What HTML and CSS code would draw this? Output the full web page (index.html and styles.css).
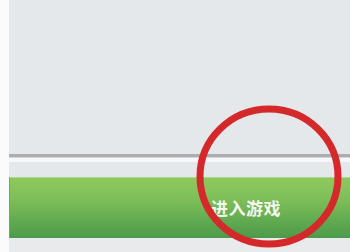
FILE: index.html
```html
<!DOCTYPE html>
<html lang="zh">
  <head>
    <meta charset="UTF-8" />
    <meta name="viewport" content="width=device-width, initial-scale=1.0" />
    <title>进入游戏</title>
    <link rel="stylesheet" href="styles.css">
  </head>

  <body>
    <div id="page">
      <div class="edge"></div>
      <div id="screen">
        <div class="top"></div>
        <div class="rule"></div>
        <div class="gap-dark"></div>
        <div class="gap-light"></div>
        <div class="gap"></div>
        <button id="enterGame"><span>进入游戏</span></button>
        <div class="bottom"></div>
      </div>
    </div>

    <svg class="mark" width="152" height="148" viewBox="0 0 152 148">
      <ellipse cx="75" cy="73.5" rx="69" ry="67.5" fill="none" stroke="#d4282b" stroke-width="7" />
    </svg>
  </body>
</html>
```

FILE: styles.css
```css
body {
  margin: 0;
  font-family: "Noto Sans CJK SC", "Noto Sans", sans-serif;
  background-color: #e5e8eb;
  overflow: hidden;
}

#page {
  display: flex;
  height: 252px;
}

.edge {
  width: 9px;
  background-color: #fbfbfb;
}

#screen {
  flex: 1;
  display: flex;
  flex-direction: column;
  background-color: #e5e8eb;
}

.top {
  height: 154px;
}

.rule {
  height: 3px;
  background-color: #abadaf;
}

.gap-dark {
  height: 1px;
  background-color: #d4d7da;
}

.gap-light {
  height: 4px;
  background-color: #f6f7f8;
}

.gap {
  height: 15px;
}

#enterGame {
  height: 61px;
  padding: 0 0 0 201px;
  display: flex;
  align-items: center;
  border: none;
  border-top: 1px solid #a8d88a;
  border-left: 1px solid #6fa858;
  background: linear-gradient(to bottom, #8ec95e 0%, #7cbc58 40%, #5ea850 75%, #4c9a4a 100%);
  color: #f4f8f0;
  font-family: inherit;
  font-size: 17px;
  font-weight: bold;
  letter-spacing: 0.5px;
  text-align: left;
}

#enterGame span {
  margin-top: -2px;
}

.bottom {
  flex: 1;
  background-color: #e8eaec;
}

.mark {
  position: absolute;
  left: 194px;
  top: 103px;
}
```
